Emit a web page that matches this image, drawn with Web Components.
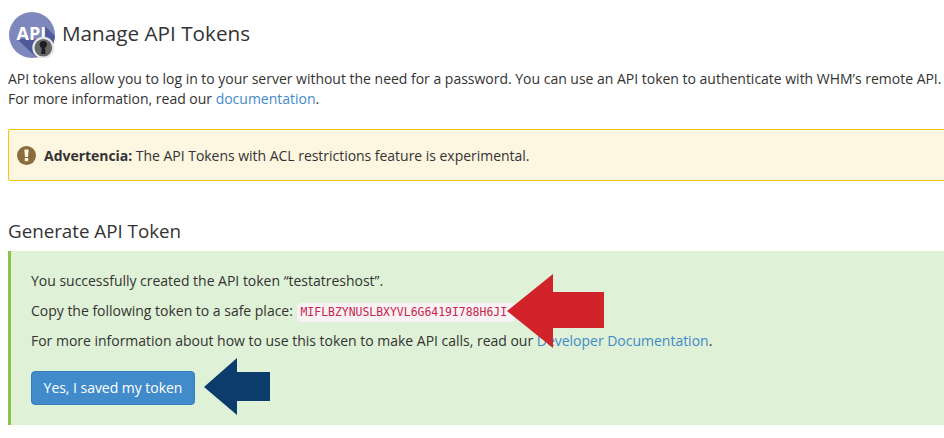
<!DOCTYPE html>
<html>
<head>
<meta charset="utf-8">
<title>Manage API Tokens</title>
<style>
html, body { margin: 0; height: 100%; overflow: hidden; background: #fff; }
body { font: 14px/20px "Open Sans", sans-serif; color: #333; }
</style>
</head>
<body>
<token-page></token-page>

<script>
(() => {
    class PageHeader extends HTMLElement {
        constructor() {
            super();
            this.attachShadow({mode: 'open'});
            this.shadowRoot.innerHTML = `
            <style>
            :host { display: flex; align-items: center; gap: 7px; height: 46px; padding: 12px 0 0 1px; }
            h1 { margin: 0; padding-bottom: 5px; font: 400 20.7px/30px "Open Sans", sans-serif; color: #333; }
            svg { display: block; }
            </style>
            <svg width="46" height="46" viewBox="0 0 46 46">
                <defs><clipPath id="c"><circle cx="23" cy="23" r="23"/></clipPath></defs>
                <circle cx="23" cy="23" r="23" fill="#7e88bd"/>
                <path d="M8 27H36V14L46 24V46H28Z" fill="#4e5a99" clip-path="url(#c)"/>
                <text x="7.5" y="27.5" font-family="Open Sans" font-weight="700" font-size="18" fill="#fff">API</text>
                <circle cx="34.3" cy="35.7" r="11" fill="#e6e6e6"/>
                <circle cx="34.3" cy="35.7" r="8.8" fill="#666"/>
                <circle cx="34.3" cy="32.5" r="3.6" fill="#1f1f1f"/>
                <path d="M32.9 34h2.8l.8 8h-4.4z" fill="#1f1f1f"/>
            </svg>
            <h1><slot></slot></h1>
            `;
        }
    }

    class WarningNotice extends HTMLElement {
        constructor() {
            super();
            this.attachShadow({mode: 'open'});
            this.shadowRoot.innerHTML = `
            <style>
            :host {
                display: flex; align-items: center; gap: 8px; box-sizing: border-box;
                height: 52px; width: 960px; padding: 1px 8px 0;
                background: #fdf6e1; border: 1px solid #f1c40f; border-radius: 2px; color: #333;
                letter-spacing: -0.03px;
            }
            svg { display: block; flex: none; }
            </style>
            <svg width="19" height="19" viewBox="0 0 19 19">
                <circle cx="9.5" cy="9.5" r="9.5" fill="#8a6d3b"/>
                <path d="M7.3 3.5h4.4l-.7 7.4H8z" fill="#fdf6e1"/>
                <rect x="7.8" y="12" width="3.4" height="3.2" rx=".6" fill="#fdf6e1"/>
            </svg>
            <div><slot></slot></div>
            `;
        }
    }

    class SuccessPanel extends HTMLElement {
        constructor() {
            super();
            this.attachShadow({mode: 'open'});
            this.shadowRoot.innerHTML = `
            <style>
            :host {
                display: block; box-sizing: border-box; width: 960px; height: 174px;
                padding: 20px 20px 0 20px; background: #dff1d6; border-left: 3px solid #8bc34a;
                letter-spacing: -0.015px;
            }
            </style>
            <slot></slot>
            `;
        }
    }

    class TokenButton extends HTMLElement {
        constructor() {
            super();
            this.attachShadow({mode: 'open'});
            this.shadowRoot.innerHTML = `
            <style>
            :host { display: inline-block; margin-top: 10px; }
            button {
                display: block; box-sizing: border-box; height: 34px; width: 164px; padding: 0;
                font: 14px/20px "Open Sans", sans-serif; letter-spacing: -0.035px; color: #fff;
                background: #428bca; border: 1px solid #357ebd; border-radius: 4px;
            }
            </style>
            <button type="button"><slot></slot></button>
            `;
        }
    }

    class TokenCode extends HTMLElement {
        constructor() {
            super();
            this.attachShadow({mode: 'open'});
            this.shadowRoot.innerHTML = `
            <style>
            :host {
                display: inline-block; padding: 0 8px 0 3px; margin-left: 1px; line-height: 19px;
                font: 11.45px/19px "DejaVu Sans Mono", monospace; letter-spacing: 0; color: #c7254e;
                background: #f9f2f4; border-radius: 4px;
            }
            </style>
            <slot></slot>
            `;
        }
    }

    // the two arrows were painted over the screenshot, they are not part of the page flow
    class CalloutArrow extends HTMLElement {
        constructor() {
            super();
            this.attachShadow({mode: 'open'});
            let w = this.getAttribute("w"), h = this.getAttribute("h");
            this.shadowRoot.innerHTML = `
            <style>
            :host { position: absolute; left: ${this.getAttribute("x")}px; top: ${this.getAttribute("y")}px; }
            svg { display: block; }
            </style>
            <svg width="${w}" height="${h}" viewBox="0 0 ${w} ${h}">
                <path d="${this.getAttribute("d")}" fill="${this.getAttribute("color")}"/>
            </svg>
            `;
        }
    }

    class TokenPage extends HTMLElement {
        constructor() {
            super();
            this.attachShadow({mode: 'open'});
            this.shadowRoot.innerHTML = `
            <style>
            :host { display: block; position: relative; height: 438px; padding-left: 8px; overflow: hidden; }
            .intro { margin: 0; padding-top: 11px; width: 950px; height: 60px; letter-spacing: -0.013px; }
            .intro p { margin: 0; height: 20px; white-space: nowrap; }
            a { color: #428bca; text-decoration: none; }
            h2 { margin: 37px 0 7px; font: 400 18.75px/26px "Open Sans", sans-serif; color: #333; }
            b { font-weight: 700; }
            p { margin: 0 0 10px; height: 20px; white-space: nowrap; }
            </style>
            <page-header>Manage API Tokens</page-header>
            <div class="intro">
                <p>API tokens allow you to log in to your server without the need for a password. You can use an API token to authenticate with WHM’s remote API.</p>
                <p>For more information, read our <a href="#">documentation</a>.</p>
            </div>
            <warning-notice><b>Advertencia:</b> The API Tokens with ACL restrictions feature is experimental.</warning-notice>
            <h2>Generate API Token</h2>
            <success-panel>
                <p>You successfully created the API token “testatreshost”.</p>
                <p>Copy the following token to a safe place: <token-code>MIFLBZYNUSLBXYVL6G6419I788H6JI</token-code></p>
                <p>For more information about how to use this token to make API calls, read our <a href="#">Developer Documentation</a>.</p>
                <token-button>Yes, I saved my token</token-button>
            </success-panel>
            <callout-arrow x="505" y="272" w="100" h="78" color="#d2232a" d="M2 39L48 2V20H99V56H48V76Z"></callout-arrow>
            <callout-arrow x="203" y="357" w="68" h="60" color="#0c3c6c" d="M1 30L34 1V15H67V44H34V58Z"></callout-arrow>
            `;
        }
    }

    window.customElements.define("page-header", PageHeader);
    window.customElements.define("warning-notice", WarningNotice);
    window.customElements.define("success-panel", SuccessPanel);
    window.customElements.define("token-button", TokenButton);
    window.customElements.define("token-code", TokenCode);
    window.customElements.define("callout-arrow", CalloutArrow);
    window.customElements.define("token-page", TokenPage);
})();
</script>
</body>
</html>
